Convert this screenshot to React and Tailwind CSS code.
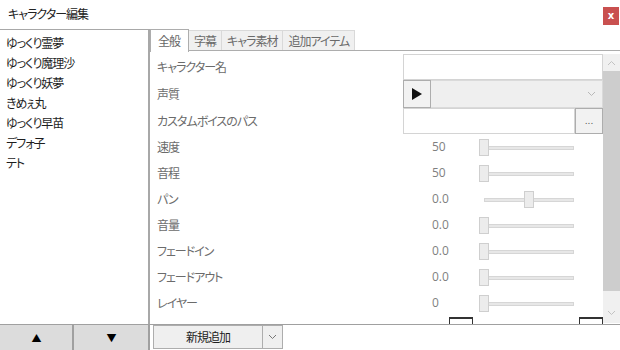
import { useState } from "react";

const characters = [
  "ゆっくり霊夢",
  "ゆっくり魔理沙",
  "ゆっくり妖夢",
  "きめぇ丸",
  "ゆっくり早苗",
  "デフォ子",
  "テト",
];

const tabs = ["全般", "字幕", "キャラ素材", "追加アイテム"];

const sliders = [
  { label: "速度", value: "50", pos: 0 },
  { label: "音程", value: "50", pos: 0 },
  { label: "パン", value: "0.0", pos: 0.5 },
  { label: "音量", value: "0.0", pos: 0 },
  { label: "フェードイン", value: "0.0", pos: 0 },
  { label: "フェードアウト", value: "0.0", pos: 0 },
  { label: "レイヤー", value: "0", pos: 0 },
];

function Chevron({ up = false, className = "" }) {
  return (
    <svg width="9" height="6" viewBox="0 0 9 6" className={className}>
      <polyline
        points={up ? "1,5 4.5,1.5 8,5" : "1,1 4.5,4.5 8,1"}
        fill="none"
        stroke="currentColor"
        strokeWidth="1"
      />
    </svg>
  );
}

// trackbar, thumb 10x17
function Slider({ pos }) {
  return (
    <div className="relative w-[95px] h-[17px]">
      <div className="absolute top-[7px] left-[5px] right-0 h-[4px] bg-[#e7e7e7] border border-[#d6d6d6]" />
      <div
        className="absolute top-0 w-[10px] h-[17px] bg-[#ececec] border border-[#cfcfcf]"
        style={{ left: `${pos * 90}px` }}
      />
    </div>
  );
}

export default function App() {
  const [tab, setTab] = useState(0);

  return (
    <div className="w-[620px] h-[350px] bg-white flex flex-col overflow-hidden font-['Noto_Sans_CJK_JP',sans-serif] [font-feature-settings:'palt'] text-[12px] tracking-[-1px] leading-none">
      {/* title bar */}
      <div className="h-[29px] flex items-start justify-between">
        <div className="pl-[8px] pt-[8px] text-[#222]">キャラクター編集</div>
        <div className="mt-[7px] mr-[1px] w-[16px] h-[18px] bg-[#c9504f] text-white text-[10px] font-bold tracking-normal flex items-center justify-center font-['DejaVu_Sans',sans-serif]">
          x
        </div>
      </div>

      <div className="flex flex-1 min-h-0">
        {/* character list */}
        <div className="w-[150px] flex flex-col">
          <div className="flex-1 border-t border-[#a8a8a8] border-r-2 border-r-[#a8a8a8] pt-[3px] pl-[6px]">
            {characters.map((c) => (
              <div key={c} className="h-[20px] flex items-center text-[#1e1e1e]">
                {c}
              </div>
            ))}
          </div>
          <div className="h-[26px] flex border-t border-[#a0a0a0] bg-[#dcdcdc]">
            <div className="w-[74px] flex items-center justify-center border-r-2 border-[#a0a0a0] text-black text-[10px]">
              ▲
            </div>
            <div className="flex-1 flex items-center justify-center border-r-2 border-[#a0a0a0] text-black text-[10px]">
              ▼
            </div>
          </div>
        </div>

        {/* right side */}
        <div className="flex-1 flex flex-col min-w-0">
          {/* tabs */}
          <div className="h-[23px] flex items-end relative">
            <div className="absolute left-0 right-0 bottom-[1px] border-b border-[#adadad]" />
            {tabs.map((t, i) =>
              i === tab ? (
                <div
                  key={t}
                  onClick={() => setTab(i)}
                  className="relative h-[23px] pl-[7px] pr-[8px] flex items-center bg-white border-l border-t border-r border-[#adadad] text-[#666] cursor-default"
                >
                  {t}
                </div>
              ) : (
                <div
                  key={t}
                  onClick={() => setTab(i)}
                  className="relative h-[20px] mb-[2px] px-[5px] flex items-center bg-[#f0f0f0] border-t border-r border-[#d9d9d9] text-[#6a6a6a] cursor-default"
                >
                  {t}
                </div>
              )
            )}
          </div>

          {/* content + scrollbar */}
          <div className="flex-1 min-h-0 flex pt-[2px]">
            <div className="flex-1 overflow-hidden pl-[7px] text-[#6b6b6b]">
              {/* character name */}
              <div className="h-[26px] flex items-center">
                <div className="w-[246px]">キャラクター名</div>
                <div className="w-[200px] h-[26px] border border-[#d4d4d4]" />
              </div>
              {/* voice */}
              <div className="h-[28px] flex items-center">
                <div className="w-[246px]">声質</div>
                <div className="w-[200px] h-[28px] flex">
                  <div className="w-[28px] h-full bg-[#f2f2f2] border border-[#adadad] flex items-center justify-center">
                    <svg width="10" height="12" viewBox="0 0 10 12">
                      <polygon points="0,0 10,6 0,12" fill="#111" />
                    </svg>
                  </div>
                  <div className="flex-1 h-full bg-[#efefef] border border-[#dadada] border-l-0 flex items-center justify-end pr-[6px] text-[#b8b8b8]">
                    <Chevron />
                  </div>
                </div>
              </div>
              {/* custom voice path */}
              <div className="h-[26px] flex items-center">
                <div className="w-[246px]">カスタムボイスのパス</div>
                <div className="w-[200px] h-[26px] flex">
                  <div className="flex-1 border border-[#d4d4d4]" />
                  <div className="w-[28px] bg-[#f2f2f2] border border-[#adadad] flex items-end justify-center pb-[7px] text-[#555] text-[9px] tracking-normal font-['DejaVu_Sans',sans-serif]">
                    ...
                  </div>
                </div>
              </div>

              {sliders.map((s) => (
                <div key={s.label} className="h-[26px] flex items-center">
                  <div className="w-[246px]">{s.label}</div>
                  <div className="w-[200px] flex items-center pl-[29px]">
                    <div className="w-[47px] text-[#7f7f7f] tracking-normal font-['Open_Sans',sans-serif]">
                      {s.value}
                    </div>
                    <Slider pos={s.pos} />
                  </div>
                </div>
              ))}

              {/* next row, cut off */}
              <div className="h-[20px] flex pt-[1px]">
                <div className="w-[292px]" />
                <div className="w-[24px] h-[20px] border-2 border-b-0 border-[#333] border-l border-r" />
                <div className="w-[106px]" />
                <div className="w-[24px] h-[20px] border-2 border-b-0 border-[#333] border-l border-r" />
              </div>
            </div>

            {/* scrollbar */}
            <div className="w-[17px] flex flex-col bg-[#f0f0f0] mb-[1px]">
              <div className="h-[17px] flex items-center justify-center text-[#c2c2c2]">
                <Chevron up />
              </div>
              <div className="h-[220px] bg-[#cdcdcd]" />
              <div className="flex-1 flex items-end justify-center pb-[7px] text-[#c2c2c2]">
                <Chevron />
              </div>
            </div>
          </div>

          {/* bottom bar */}
          <div className="h-[26px] border-t border-[#a0a0a0] flex items-end pb-[1px] pl-[3px]">
            <div className="w-[110px] h-[24px] bg-[#efefef] border border-[#adadad] flex items-center justify-center text-[#1e1e1e]">
              新規追加
            </div>
            <div className="w-[20px] h-[24px] bg-[#efefef] border border-l-0 border-[#adadad] flex items-center justify-center text-[#777]">
              <Chevron />
            </div>
          </div>
        </div>
      </div>
    </div>
  );
}
